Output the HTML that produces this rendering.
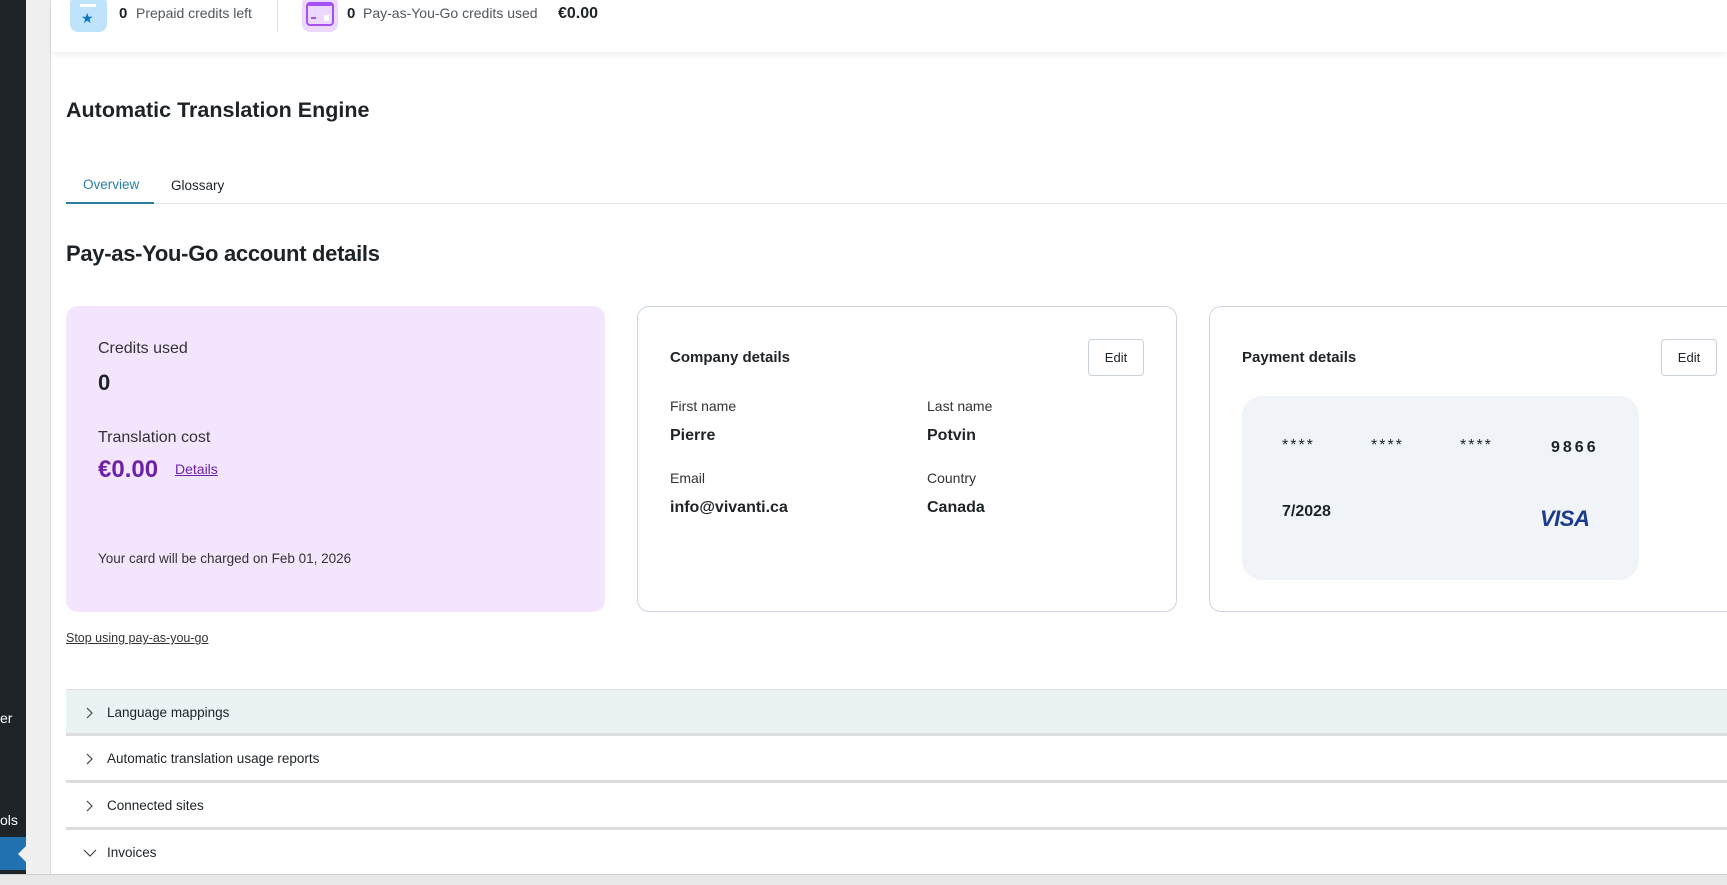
<!DOCTYPE html>
<html><head><meta charset="utf-8"><style>
*{box-sizing:border-box;margin:0;padding:0}
body{width:1727px;height:885px;overflow:hidden;background:#fff;font-family:"Liberation Sans",sans-serif;color:#1d2327;position:relative}
.abs{position:absolute;white-space:nowrap}
.side{position:absolute;left:0;top:0;width:26px;height:875px;background:#1d2327}
.gray{position:absolute;left:26px;top:0;width:25px;height:875px;background:#f0f0f1;border-right:1px solid #dcdcde}
.top{position:absolute;left:51px;top:0;width:1676px;height:52px;background:#fff;box-shadow:0 3px 6px rgba(0,0,0,.06)}
.card{position:absolute;top:306px;height:306px;border-radius:12px}
.c2,.c3{border:1px solid #cdd5e0;background:#fff}
.btn{position:absolute;width:56px;height:37px;border:1px solid #c8d0da;border-radius:4px;font-size:13px;text-align:center;line-height:35px;color:#1d2327;background:#fff}
.lbl{font-size:14px;color:#333}
.val{font-size:16px;font-weight:bold}
.row{position:absolute;left:66px;width:1661px;height:47px;border-bottom:3px solid #dcdcde;font-size:13.5px;color:#1d2327}
.row span{position:absolute;left:41px;top:15px}
.row svg{position:absolute;left:18px;top:17px}
</style></head><body>
<div class="side"></div>
<div class="abs" style="left:0;top:710px;color:#fff;font-size:14px">er</div>
<div class="abs" style="left:0;top:812px;color:#fff;font-size:14px">ols</div>
<div style="position:absolute;left:0;top:837px;width:26px;height:33px;background:#2271b1"></div>
<div style="position:absolute;left:18px;top:846px;width:0;height:0;border-top:8px solid transparent;border-bottom:8px solid transparent;border-right:8px solid #f0f0f1"></div>
<div class="gray"></div>
<div class="top"></div>
<div style="position:absolute;left:70px;top:-4px;width:37px;height:36px;background:#bfe3fb;border-radius:8px"></div>
<div style="position:absolute;left:80px;top:4px;width:16px;height:3px;background:#fff;border-radius:1px"></div>
<div class="abs" style="left:81px;top:10px;color:#0a73c2;font-size:14px">★</div>
<div class="abs" style="left:119px;top:5px;font-size:15px;font-weight:bold">0</div>
<div class="abs" style="left:136px;top:5px;font-size:14px;color:#50575e">Prepaid credits left</div>
<div style="position:absolute;left:277px;top:0;width:1px;height:32px;background:#dcdcde"></div>
<div style="position:absolute;left:302px;top:-4px;width:36px;height:36px;background:#ecd8fd;border-radius:8px"></div>
<div style="position:absolute;left:306px;top:2px;width:28px;height:24px;border:2px solid #a550f0;border-radius:4px;border-top-width:4px"></div>
<div style="position:absolute;left:311px;top:17px;width:5px;height:2px;background:#a550f0"></div>
<div style="position:absolute;left:324px;top:15px;width:5px;height:6px;background:#fff"></div>
<div class="abs" style="left:347px;top:5px;font-size:15px;font-weight:bold">0</div>
<div class="abs" style="left:363px;top:5px;font-size:14px;color:#50575e">Pay-as-You-Go credits used</div>
<div class="abs" style="left:558px;top:5px;font-size:16px;font-weight:bold">€0.00</div>

<div class="abs" style="left:66px;top:98px;font-size:21.5px;font-weight:bold;color:#1d2327">Automatic Translation Engine</div>
<div class="abs" style="left:83px;top:177px;font-size:13.5px;color:#2a7fa0">Overview</div>
<div class="abs" style="left:171px;top:178px;font-size:13.5px">Glossary</div>
<div style="position:absolute;left:66px;top:203px;width:1661px;height:1px;background:#dfe7ea"></div>
<div style="position:absolute;left:66px;top:202px;width:88px;height:2px;background:#2a7fa0"></div>
<div class="abs" style="left:66px;top:241px;font-size:22px;font-weight:bold;letter-spacing:-0.3px">Pay-as-You-Go account details</div>

<div class="card" style="left:66px;width:539px;background:#f3e5fd"></div>
<div class="abs" style="left:98px;top:340px;font-size:16px;color:#333">Credits used</div>
<div class="abs" style="left:98px;top:370px;font-size:22px;font-weight:bold">0</div>
<div class="abs" style="left:98px;top:429px;font-size:16px;color:#333">Translation cost</div>
<div class="abs" style="left:98px;top:456px;font-size:24px;font-weight:bold;color:#6b22a8">€0.00</div>
<div class="abs" style="left:175px;top:461px;font-size:14px;color:#6b22a8;text-decoration:underline">Details</div>
<div class="abs" style="left:98px;top:551px;font-size:13.5px;color:#333">Your card will be charged on Feb 01, 2026</div>

<div class="card c2" style="left:637px;width:540px"></div>
<div class="abs" style="left:670px;top:349px;font-size:15px;font-weight:bold">Company details</div>
<div class="btn" style="left:1088px;top:339px">Edit</div>
<div class="abs lbl" style="left:670px;top:398px">First name</div>
<div class="abs val" style="left:670px;top:427px">Pierre</div>
<div class="abs lbl" style="left:927px;top:398px">Last name</div>
<div class="abs val" style="left:927px;top:427px">Potvin</div>
<div class="abs lbl" style="left:670px;top:470px">Email</div>
<div class="abs val" style="left:670px;top:499px">info@vivanti.ca</div>
<div class="abs lbl" style="left:927px;top:470px">Country</div>
<div class="abs val" style="left:927px;top:499px">Canada</div>

<div class="card c3" style="left:1209px;width:540px"></div>
<div class="abs" style="left:1242px;top:349px;font-size:15px;font-weight:bold">Payment details</div>
<div class="btn" style="left:1661px;top:339px">Edit</div>
<div style="position:absolute;left:1242px;top:396px;width:397px;height:184px;background:#f0f3f7;border-radius:20px"></div>
<div class="abs" style="left:1282px;top:437px;font-size:16px;letter-spacing:2px">****</div>
<div class="abs" style="left:1371px;top:437px;font-size:16px;letter-spacing:2px">****</div>
<div class="abs" style="left:1460px;top:437px;font-size:16px;letter-spacing:2px">****</div>
<div class="abs" style="left:1551px;top:439px;font-size:16px;font-weight:bold;letter-spacing:3px">9866</div>
<div class="abs" style="left:1282px;top:503px;font-size:16px;font-weight:bold">7/2028</div>
<div class="abs" style="left:1540px;top:506px;font-size:22px;font-weight:bold;font-style:italic;color:#1a3b8c;letter-spacing:-0.5px">VISA</div>

<div class="abs" style="left:66px;top:631px;font-size:12.5px;color:#333;text-decoration:underline">Stop using pay-as-you-go</div>

<div class="row" style="top:689px;background:#eaf2f3;border-top:1px solid #dcdcde"><svg width="10" height="12"><path d="M3 1 L8 6 L3 11" fill="none" stroke="#444" stroke-width="1.2"/></svg><span>Language mappings</span></div>
<div class="row" style="top:736px"><svg width="10" height="12"><path d="M3 1 L8 6 L3 11" fill="none" stroke="#444" stroke-width="1.2"/></svg><span>Automatic translation usage reports</span></div>
<div class="row" style="top:783px"><svg width="10" height="12"><path d="M3 1 L8 6 L3 11" fill="none" stroke="#444" stroke-width="1.2"/></svg><span>Connected sites</span></div>
<div class="row" style="top:830px;border-bottom:none"><svg width="14" height="10" style="left:17px;top:18px"><path d="M1 2 L7 8 L13 2" fill="none" stroke="#444" stroke-width="1.2"/></svg><span>Invoices</span></div>
<div style="position:absolute;left:0;top:874px;width:1727px;height:11px;background:#e8e8e8;border-top:1px solid #cfcfcf"></div>
</body></html>
